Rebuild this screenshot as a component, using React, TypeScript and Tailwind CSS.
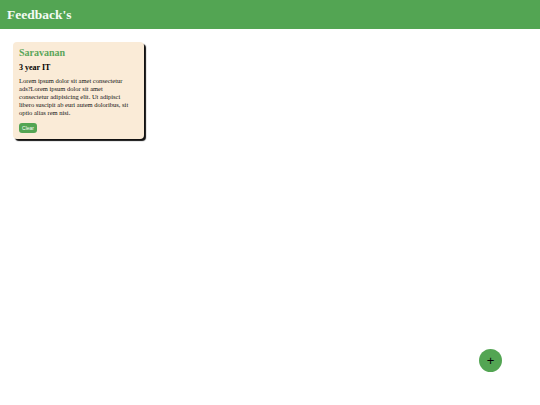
export default function App() {
  return (
    <div className="min-h-screen bg-white font-['Liberation_Serif',serif] text-black">
      <header className="flex h-[29px] items-center bg-[#53a553] pl-[7px]">
        <h1 className="text-[13.5px] font-bold leading-none text-[#f4fbf4]">Feedback's</h1>
      </header>

      <main className="flex flex-wrap gap-3 pl-[13px] pt-[13px]">
        <div className="w-[131px] rounded-[4px] bg-[#faebd7] px-[6px] pb-[6px] pt-[5px] shadow-[2px_2px_1px_#111]">
          <h2 className="text-[10px] font-bold leading-[12px] text-[#5aa65a]">Saravanan</h2>
          <h3 className="mt-[4px] text-[8px] font-bold leading-[10px]">3 year IT</h3>
          <p className="mt-[4px] text-[6.5px] leading-[8px] text-[#111]">
            Lorem ipsum dolor sit amet consectetur
            <br />
            ads?Lorem ipsum dolor sit amet
            <br />
            consectetur adipisicing elit. Ut adipisci
            <br />
            libero suscipit ab euri autem doloribus, sit
            <br />
            optio alias rem nisi.
          </p>
          <button className="mt-[6px] flex h-[10px] w-[18px] items-center justify-center rounded-[3px] bg-[#53a553] font-['Liberation_Sans',sans-serif] text-[5px] leading-none text-white">
            Clear
          </button>
        </div>
      </main>

      <button className="fixed bottom-[33px] right-[38px] flex h-[23px] w-[23px] items-center justify-center rounded-full bg-[#53a553] font-['Liberation_Sans',sans-serif] text-[13px] leading-none text-black">
        +
      </button>
    </div>
  );
}
